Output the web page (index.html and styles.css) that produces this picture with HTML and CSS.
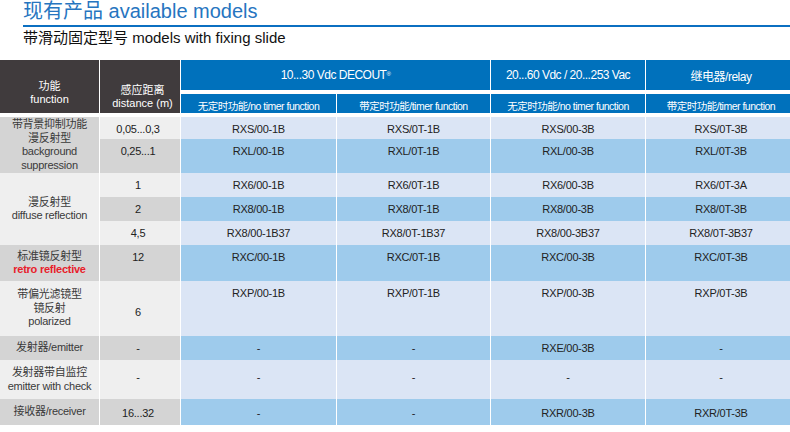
FILE: index.html
```html
<!DOCTYPE html>
<html lang="zh">
<head>
<meta charset="utf-8">
<link rel="stylesheet" href="styles.css">
</head>
<body>
<div class="page">
  <div class="head">
    <h1 class="title">现有产品 available models</h1>
    <h2 class="subtitle">带滑动固定型号 models with fixing slide</h2>
  </div>

  <div class="grid thead">
    <div class="th-dark th-k"><span>功能</span><span>function</span></div>
    <div class="th-dark th-d"><span>感应距离</span><span>distance (m)</span></div>
    <div class="th-blue span2">10...30 Vdc DECOUT<sup>®</sup></div>
    <div class="th-blue">20...60 Vdc / 20...253 Vac</div>
    <div class="th-blue">继电器/relay</div>
    <div class="th-sub">无定时功能/no timer function</div>
    <div class="th-sub">带定时功能/timer function</div>
    <div class="th-sub">无定时功能/no timer function</div>
    <div class="th-sub">带定时功能/timer function</div>
  </div>

  <div class="grid tbody">
    <div class="row odd">
      <div class="k dark rs2 top"><span>带背景抑制功能</span><span>漫反射型</span><span>background</span><span>suppression</span></div>
      <div class="d">0,05...0,3</div>
      <div class="m">RXS/00-1B</div>
      <div class="m">RXS/0T-1B</div>
      <div class="m">RXS/00-3B</div>
      <div class="m">RXS/0T-3B</div>
    </div>
    <div class="row even">
      <div class="d">0,25...1</div>
      <div class="m">RXL/00-1B</div>
      <div class="m">RXL/0T-1B</div>
      <div class="m">RXL/00-3B</div>
      <div class="m">RXL/0T-3B</div>
    </div>
    <div class="row odd">
      <div class="k light rs3"><span>漫反射型</span><span>diffuse reflection</span></div>
      <div class="d">1</div>
      <div class="m">RX6/00-1B</div>
      <div class="m">RX6/0T-1B</div>
      <div class="m">RX6/00-3B</div>
      <div class="m">RX6/0T-3A</div>
    </div>
    <div class="row even">
      <div class="d">2</div>
      <div class="m">RX8/00-1B</div>
      <div class="m">RX8/0T-1B</div>
      <div class="m">RX8/00-3B</div>
      <div class="m">RX8/0T-3B</div>
    </div>
    <div class="row odd">
      <div class="d">4,5</div>
      <div class="m">RX8/00-1B37</div>
      <div class="m">RX8/0T-1B37</div>
      <div class="m">RX8/00-3B37</div>
      <div class="m">RX8/0T-3B37</div>
    </div>
    <div class="row even">
      <div class="k dark"><span>标准镜反射型</span><span class="red">retro reflective</span></div>
      <div class="d">12</div>
      <div class="m">RXC/00-1B</div>
      <div class="m">RXC/0T-1B</div>
      <div class="m">RXC/00-3B</div>
      <div class="m">RXC/0T-3B</div>
    </div>
    <div class="row odd">
      <div class="k light"><span>带偏光滤镜型</span><span>镜反射</span><span>polarized</span></div>
      <div class="d mid">6</div>
      <div class="m">RXP/00-1B</div>
      <div class="m">RXP/0T-1B</div>
      <div class="m">RXP/00-3B</div>
      <div class="m">RXP/0T-3B</div>
    </div>
    <div class="row even">
      <div class="k dark"><span>发射器/emitter</span></div>
      <div class="d">-</div>
      <div class="m">-</div>
      <div class="m">-</div>
      <div class="m">RXE/00-3B</div>
      <div class="m">-</div>
    </div>
    <div class="row odd tall">
      <div class="k light"><span>发射器带自监控</span><span>emitter with check</span></div>
      <div class="d">-</div>
      <div class="m">-</div>
      <div class="m">-</div>
      <div class="m">-</div>
      <div class="m">-</div>
    </div>
    <div class="row even last">
      <div class="k dark"><span>接收器/receiver</span></div>
      <div class="d">16...32</div>
      <div class="m">-</div>
      <div class="m">-</div>
      <div class="m">RXR/00-3B</div>
      <div class="m">RXR/0T-3B</div>
    </div>
  </div>
</div>
</body>
</html>
```

FILE: styles.css
```css
* {
  box-sizing: border-box;
  margin: 0;
  padding: 0;
}

html, body {
  background: #ffffff;
}

body {
  width: 790px;
  height: 432px;
  overflow: hidden;
  font-family: "Liberation Sans", Arial, "Noto Sans CJK SC", sans-serif;
}

.page {
  display: flex;
  flex-direction: column;
  width: 800px;
}

.head {
  padding-left: 23px;
  width: 790px;
}

.title {
  font-size: 20px;
  line-height: 23px;
  font-weight: normal;
  color: #2675c0;
  padding-bottom: 2px;
  border-bottom: 2px solid #0b6fc1;
}

.subtitle {
  margin-top: 2px;
  font-size: 15px;
  line-height: 17px;
  font-weight: normal;
  color: #111111;
}

.grid {
  display: grid;
  grid-template-columns: 99px 80px 155px 153px 154px 150px;
  column-gap: 1px;
}

.thead {
  margin-top: 14px;
  grid-template-rows: 30px 19px;
  row-gap: 4px;
}

.th-dark {
  grid-row: span 2;
  background: #403b3d;
  color: #ffffff;
  font-size: 11px;
  line-height: 13px;
  display: flex;
  flex-direction: column;
  align-items: center;
  text-align: center;
}

.th-k {
  padding-top: 20px;
}

.th-d {
  padding-top: 24px;
  padding-left: 5px;
}

.th-blue {
  background: #0071bc;
  color: #ffffff;
  font-size: 12px;
  letter-spacing: -0.5px;
  display: flex;
  align-items: center;
  justify-content: center;
}

.th-blue sup {
  font-size: 6px;
  line-height: 0;
  position: relative;
  top: -1px;
}

.span2 {
  grid-column: span 2;
}

.th-sub {
  background: #0071bc;
  color: #ffffff;
  font-size: 10.5px;
  letter-spacing: -0.5px;
  display: flex;
  align-items: center;
  justify-content: center;
  padding-top: 3px;
  white-space: nowrap;
}

.tbody {
  margin-top: 4px;
  grid-template-rows: 22px 34px 24px 24px 24px 36px 55px 24px 39px 26px;
}

.row {
  display: contents;
}

.k,
.d,
.m {
  font-size: 11px;
  letter-spacing: -0.25px;
  line-height: 14px;
  color: #222222;
  text-align: center;
  white-space: nowrap;
}

.k {
  display: flex;
  flex-direction: column;
  justify-content: center;
  align-items: center;
  line-height: 13.5px;
  color: #3a3a3a;
}

.k.dark {
  background: #d4d4d4;
}

.k.light {
  background: #efefef;
}

.rs2 {
  grid-row: span 2;
}

.rs3 {
  grid-row: span 3;
}

.red {
  color: #e8202a;
  font-weight: bold;
}

.d,
.m {
  display: flex;
  justify-content: center;
  align-items: flex-start;
  padding-top: 5px;
}

.d {
  padding-right: 4px;
}

.odd > .d {
  background: #efefef;
}

.even > .d {
  background: #d4d4d4;
}

.odd > .m {
  background: #dbe5f5;
}

.even > .m {
  background: #9ecbec;
}

.d.mid {
  align-items: center;
  padding-top: 6px;
}

.tall > .d,
.tall > .m {
  padding-top: 10px;
}

.last > .d,
.last > .m {
  padding-top: 7px;
}
```
